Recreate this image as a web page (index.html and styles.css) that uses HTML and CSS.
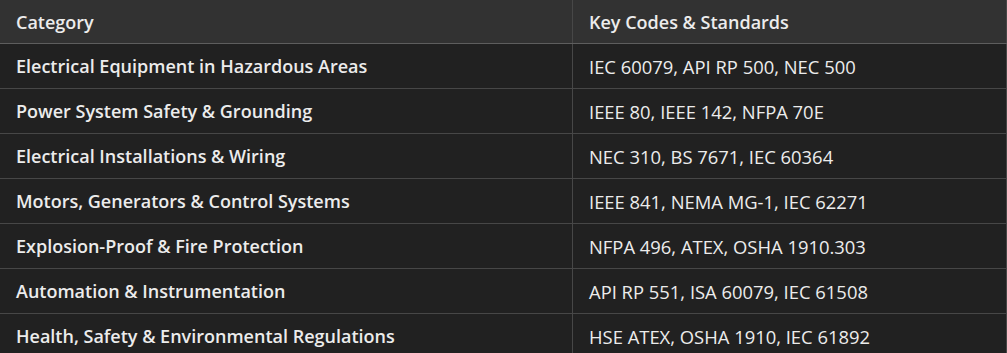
FILE: index.html
```html
<!DOCTYPE html>
<html>
<head>
<meta charset="utf-8">
<link rel="stylesheet" href="styles.css">
</head>
<body>
<table class="codes">
  <thead>
    <tr><th class="c1">Category</th><th class="c2">Key Codes &amp; Standards</th></tr>
  </thead>
  <tbody>
    <tr><td class="cat">Electrical Equipment in Hazardous Areas</td><td class="std">IEC 60079, API RP 500, NEC 500</td></tr>
    <tr><td class="cat">Power System Safety &amp; Grounding</td><td class="std">IEEE 80, IEEE 142, NFPA 70E</td></tr>
    <tr><td class="cat">Electrical Installations &amp; Wiring</td><td class="std">NEC 310, BS 7671, IEC 60364</td></tr>
    <tr><td class="cat">Motors, Generators &amp; Control Systems</td><td class="std">IEEE 841, NEMA MG-1, IEC 62271</td></tr>
    <tr><td class="cat">Explosion-Proof &amp; Fire Protection</td><td class="std">NFPA 496, ATEX, OSHA 1910.303</td></tr>
    <tr><td class="cat">Automation &amp; Instrumentation</td><td class="std">API RP 551, ISA 60079, IEC 61508</td></tr>
    <tr><td class="cat">Health, Safety &amp; Environmental Regulations</td><td class="std">HSE ATEX, OSHA 1910, IEC 61892</td></tr>
  </tbody>
</table>
</body>
</html>
```

FILE: styles.css
```css
html, body {
  margin: 0;
  padding: 0;
  background: #212121;
}
body {
  font-family: "Open Sans", "Noto Sans", sans-serif;
  color: #ececec;
  overflow: hidden;
}
.codes {
  width: 1007px;
  border-collapse: collapse;
  table-layout: fixed;
  font-size: 18px;
}
.codes th, .codes td {
  text-align: left;
  padding: 0 16px;
  border-right: 1px solid #474747;
  white-space: nowrap;
}
.codes th.c1, .codes td.cat {
  width: 540px;
}
.codes thead th {
  background: #323232;
  height: 43px;
  font-weight: 600;
  border-bottom: 1px solid #5e5e5e;
}
.codes tbody td {
  height: 44px;
  border-bottom: 1px solid #474747;
  font-weight: 400;
}
.codes tbody td.cat {
  font-weight: 600;
}
.codes tbody td.std {
  font-size: 18.4px;
}
```
